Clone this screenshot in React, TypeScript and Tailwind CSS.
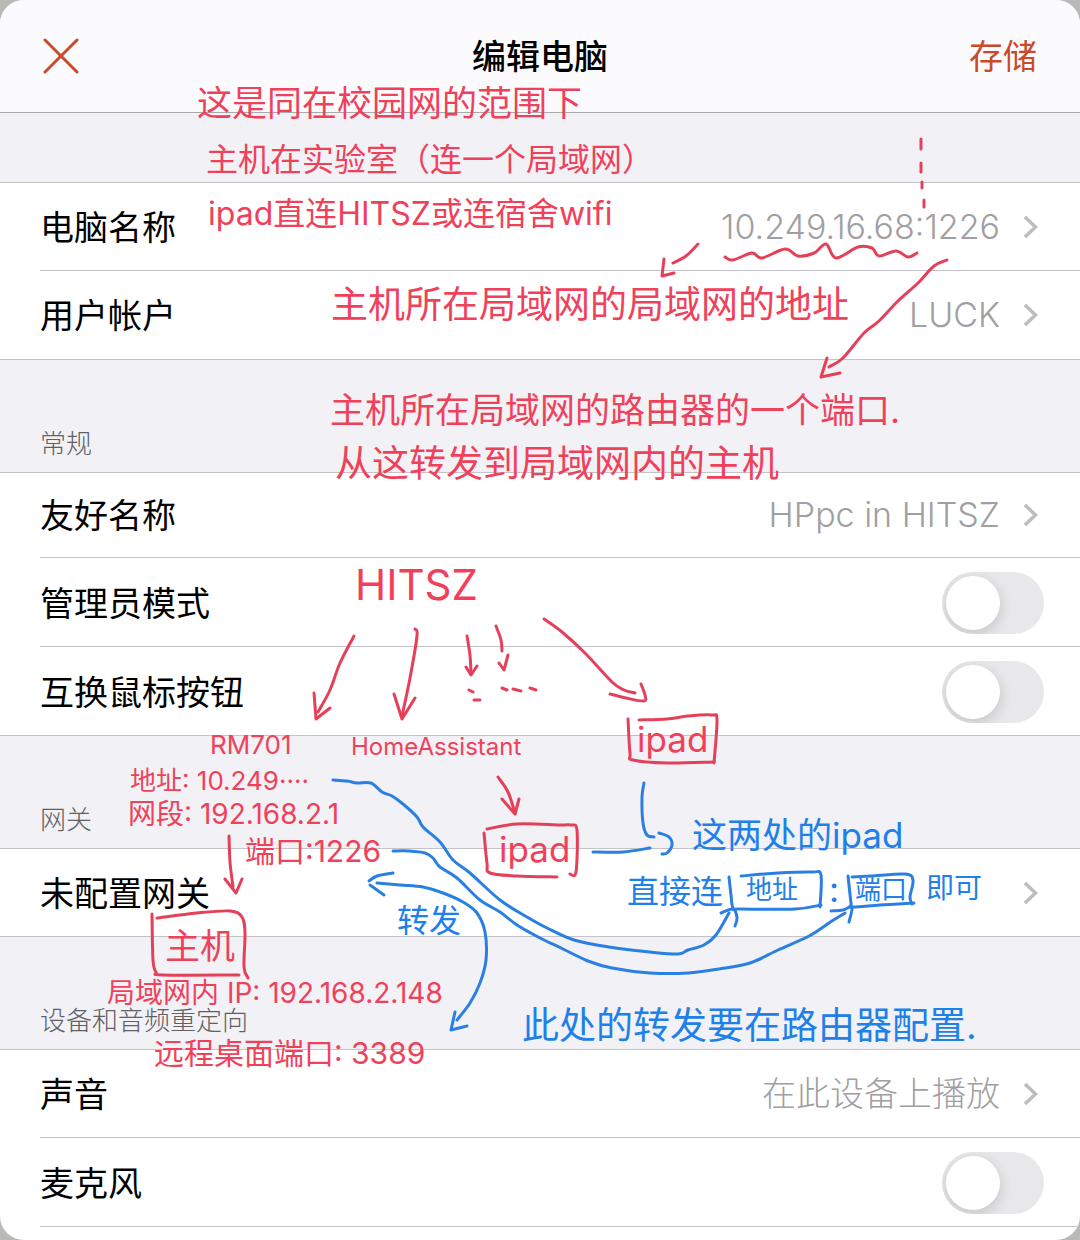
import { useId } from "react";
import { clsx } from "clsx";

type Point = [number, number];

/** Turns a list of pen points into a smooth curve. */
function smooth(points: Point[]): string {
  let d = `M${points[0][0]} ${points[0][1]}`;
  for (let i = 0; i < points.length - 1; i++) {
    const p0 = points[i - 1] ?? points[i];
    const p1 = points[i];
    const p2 = points[i + 1];
    const p3 = points[i + 2] ?? p2;
    d += `C${p1[0] + (p2[0] - p0[0]) / 6} ${p1[1] + (p2[1] - p0[1]) / 6} ${p2[0] - (p3[0] - p1[0]) / 6} ${p2[1] - (p3[1] - p1[1]) / 6} ${p2[0]} ${p2[1]}`;
  }
  return d;
}

const redCurves: Point[][] = [
  // underline below the address
  [[725, 257], [733, 260], [752, 253], [762, 258], [785, 249], [798, 256], [814, 253], [826, 244], [836, 258], [858, 247], [872, 248], [879, 256], [896, 251], [908, 257], [917, 253]],
  [[698, 244], [686, 256], [673, 263]],
  [[947, 260], [934, 266], [918, 283], [897, 302], [879, 321], [864, 333], [843, 358], [829, 367]],
  // branches of the network tree
  [[354, 636], [340, 663], [330, 690], [318, 712]],
  [[415, 629], [417, 636], [410, 678], [402, 716]],
  [[467, 636], [470, 655], [471, 674]],
  [[496, 626], [501, 640], [502, 651]],
  [[544, 619], [562, 632], [585, 653], [612, 682], [624, 690], [635, 693]],
  [[610, 694], [626, 698], [644, 701], [645, 695], [641, 684]],
  [[498, 777], [508, 792], [515, 813]],
  [[229, 836], [230, 862], [233, 887]],
  // right-hand ipad box
  [[628, 719], [630, 753], [633, 760], [667, 763], [714, 762]],
  [[639, 720], [667, 719], [688, 716], [712, 715], [717, 720], [714, 763]],
  // middle ipad box
  [[484, 833], [487, 863], [490, 873], [517, 876], [557, 877]],
  [[487, 829], [517, 824], [560, 825], [571, 825], [577, 830], [576, 872], [570, 874]],
  // host box
  [[152, 914], [153, 960], [156, 972], [163, 975], [239, 975]],
  [[157, 918], [197, 913], [230, 911], [242, 917], [245, 933], [244, 967], [248, 978]],
];

const redLines =
  "M921 139v10M921 163v9M922 182v6M924 200v7" +
  "M664 259L662 276L674 273M827 358L821 377L840 373" +
  "M314 693L316 719L330 708M394 694L402 719L415 698M466 667L471 675L477 666" +
  "M469 690L473 692M474 700H480M499 663L504 670L508 655" +
  "M502 688L507 690M513 689L521 691M530 688L536 690" +
  "M502 799L515 814L519 799M225 879L236 893L242 879";

const blueCurves: Point[][] = [
  [[333, 780], [347, 781], [357, 783], [371, 783], [382, 792], [392, 796], [403, 804], [417, 817], [423, 827], [440, 842], [453, 860], [470, 873], [500, 900], [527, 917], [547, 928], [574, 940], [609, 947], [650, 952], [678, 954], [688, 950], [704, 945], [716, 935], [729, 913]],
  [[721, 913], [733, 909], [737, 918], [735, 926]],
  [[393, 851], [409, 851], [425, 853], [433, 858], [440, 867], [457, 878], [480, 900], [500, 912], [517, 925], [540, 938], [561, 948], [588, 961], [612, 968], [650, 973], [688, 973], [719, 969], [750, 963], [778, 950], [809, 936], [829, 923], [845, 913]],
  [[831, 911], [843, 910], [852, 907], [849, 922]],
  // two-headed forwarding arrow
  [[393, 873], [377, 876], [369, 881]],
  [[377, 883], [400, 885], [423, 887], [443, 893], [463, 902], [477, 913], [485, 932], [486, 960], [480, 983], [470, 1003], [457, 1020]],
  // connectors to the blue note
  [[644, 783], [642, 797], [643, 823], [647, 835], [654, 837]],
  [[659, 833], [669, 837], [672, 845], [667, 853], [662, 854]],
  [[593, 852], [623, 852], [650, 848]],
  // address box
  [[729, 877], [731, 895], [733, 908], [740, 909], [795, 909], [821, 905]],
  [[741, 876], [778, 873], [812, 872], [821, 875], [820, 907]],
  // port box
  [[848, 876], [851, 903], [852, 907], [880, 905], [914, 903]],
  [[852, 877], [871, 876], [905, 874], [913, 880], [910, 897], [912, 904]],
];

const blueLines = "M370 885L384 895M455 1012L451 1030L467 1026";

const redNotes = [
  { text: "这是同在校园网的范围下", place: "left-[197px] top-[86px] text-[35px]" },
  { text: "主机在实验室（连一个局域网）", place: "left-[206px] top-[144px] text-[32px]" },
  { text: "ipad直连HITSZ或连宿舍wifi", place: "left-[208px] top-[198px] text-[32px]" },
  { text: "主机所在局域网的局域网的地址", place: "left-[331px] top-[286px] text-[37px]" },
  { text: "主机所在局域网的路由器的一个端口.", place: "left-[330px] top-[393px] text-[35px]" },
  { text: "从这转发到局域网内的主机", place: "left-[335px] top-[445px] text-[37px]" },
  { text: "HITSZ", place: "left-[355px] top-[564px] text-[42px]" },
  { text: "RM701", place: "left-[210px] top-[732px] text-[26px]" },
  { text: "HomeAssistant", place: "left-[351px] top-[735px] text-[24px]" },
  { text: "地址: 10.249····", place: "left-[130px] top-[768px] text-[26px]" },
  { text: "网段: 192.168.2.1", place: "left-[128px] top-[800px] text-[28px]" },
  { text: "端口:1226", place: "left-[245px] top-[836px] text-[30px]" },
  { text: "ipad", place: "left-[637px] top-[722px] text-[35px]" },
  { text: "ipad", place: "left-[499px] top-[832px] text-[35px]" },
  { text: "主机", place: "left-[165px] top-[929px] text-[35px]" },
  { text: "局域网内 IP: 192.168.2.148", place: "left-[107px] top-[979px] text-[28px]" },
  { text: "远程桌面端口: 3389", place: "left-[154px] top-[1038px] text-[30px]" },
];

const blueNotes = [
  { text: "转发", place: "left-[397px] top-[905px] text-[32px]" },
  { text: "这两处的ipad", place: "left-[692px] top-[818px] text-[35px]" },
  { text: "直接连", place: "left-[627px] top-[876px] text-[32px]" },
  { text: "地址", place: "left-[746px] top-[877px] text-[26px]" },
  { text: ":", place: "left-[829px] top-[872px] text-[35px]" },
  { text: "端口", place: "left-[855px] top-[877px] text-[26px]" },
  { text: "即可", place: "left-[926px] top-[874px] text-[28px]" },
  { text: "此处的转发要在路由器配置.", place: "left-[522px] top-[1007px] text-[37px]" },
];

function Annotations() {
  return (
    <div className="pointer-events-none absolute inset-0 overflow-hidden">
      <svg className="absolute inset-0 size-full" fill="none" strokeWidth="3" strokeLinecap="round" strokeLinejoin="round" aria-hidden="true">
        <g stroke="#e5405a">
          {redCurves.map((points, i) => (
            <path key={i} d={smooth(points)} />
          ))}
          <path d={redLines} />
        </g>
        <g stroke="#2a80e2">
          {blueCurves.map((points, i) => (
            <path key={i} d={smooth(points)} />
          ))}
          <path d={blueLines} />
        </g>
      </svg>
      {redNotes.map((note, i) => (
        <span key={i} className={clsx("absolute leading-none whitespace-nowrap text-[#f0415a]", note.place)}>
          {note.text}
        </span>
      ))}
      {blueNotes.map((note, i) => (
        <span key={i} className={clsx("absolute leading-none whitespace-nowrap text-[#2080ea]", note.place)}>
          {note.text}
        </span>
      ))}
    </div>
  );
}

function Chevron() {
  return (
    <svg className="h-6 w-4 shrink-0" viewBox="0 0 16 24" fill="none" stroke="#bdbdc0" strokeWidth="3.5" aria-hidden="true">
      <path d="M1 2l10.500 10L1 22" />
    </svg>
  );
}

type RowProps = { label: string; height?: string; last?: boolean };

function LinkRow({ label, value, height = "h-22", last }: RowProps & { value?: string }) {
  return (
    <li className={clsx(last && "border-b border-[#c4c4c8]")}>
      <button type="button" className={clsx("flex w-full items-center pl-10 text-left", height)}>
        <span className={clsx("flex h-full flex-1 items-center justify-between pr-10", !last && "border-b border-[#c4c4c8]")}>
          <span className="pt-0.5 text-[34px] leading-10">{label}</span>
          <span className="flex items-center gap-6 text-[34px] leading-10 font-light text-[#a0a0a2]">
            {value}
            <Chevron />
          </span>
        </span>
      </button>
    </li>
  );
}

function SwitchRow({ label, height = "h-22", last }: RowProps) {
  const id = useId();
  return (
    <li className={clsx("pl-10", last && "ml-0 border-b border-[#c4c4c8]")}>
      <div className={clsx("flex items-center justify-between pt-0.5 pr-9", !last && "border-b border-[#c4c4c8]", height)}>
        <label htmlFor={id} className="pt-0.5 text-[34px] leading-10">
          {label}
        </label>
        <input
          id={id}
          type="checkbox"
          role="switch"
          className="flex h-[62px] w-[102px] appearance-none items-center overflow-hidden rounded-full bg-[#e8e8ea] px-1 before:size-[54px] before:rounded-full before:bg-white before:shadow-[0_4px_14px_rgba(0,0,0,0.16)] before:content-[''] checked:justify-end checked:bg-[#34c759]"
        />
      </div>
    </li>
  );
}

function SectionTitle({ children }: { children: string }) {
  return (
    <h2 className="flex h-[113px] items-end border-b border-[#c4c4c8] bg-[#f1f1f6] px-10 pb-3 text-[26px] leading-8 font-light text-[#5f5f64]">
      {children}
    </h2>
  );
}

export default function App() {
  return (
    <div className="min-h-screen bg-[#b9bab6]">
      <main className="relative min-h-screen overflow-hidden rounded-[24px] bg-white font-['Inter','Noto_Sans_CJK_SC',sans-serif] text-black">
        <header className="grid h-[113px] grid-cols-3 items-center border-b border-[#a9a9ae] bg-[#fbfbfd] px-[43px]">
          <button type="button" aria-label="关闭" className="justify-self-start">
            <svg className="size-9" viewBox="0 0 36 36" fill="none" stroke="#c9492b" strokeWidth="3" strokeLinecap="round">
              <path d="M2 2l32 32M34 2L2 34" />
            </svg>
          </button>
          <h1 className="pt-0.5 text-center text-[34px] leading-10 font-medium">编辑电脑</h1>
          <button type="button" className="justify-self-end pt-0.5 text-[34px] leading-10 text-[#c9492b]">
            存储
          </button>
        </header>

        <div className="h-[70px] border-b border-[#c4c4c8] bg-[#f1f1f6]" />
        <ul>
          <LinkRow label="电脑名称" value="10.249.16.68:1226" />
          <LinkRow label="用户帐户" value="LUCK" last />
        </ul>

        <SectionTitle>常规</SectionTitle>
        <ul>
          <LinkRow label="友好名称" value="HPpc in HITSZ" height="h-[85px]" />
          <SwitchRow label="管理员模式" height="h-[89px]" />
          <SwitchRow label="互换鼠标按钮" last />
        </ul>

        <SectionTitle>网关</SectionTitle>
        <ul>
          <LinkRow label="未配置网关" height="h-[87px]" last />
        </ul>

        <SectionTitle>设备和音频重定向</SectionTitle>
        <ul>
          <LinkRow label="声音" value="在此设备上播放" />
          <SwitchRow label="麦克风" height="h-[89px]" />
        </ul>

        <Annotations />
      </main>
    </div>
  );
}
